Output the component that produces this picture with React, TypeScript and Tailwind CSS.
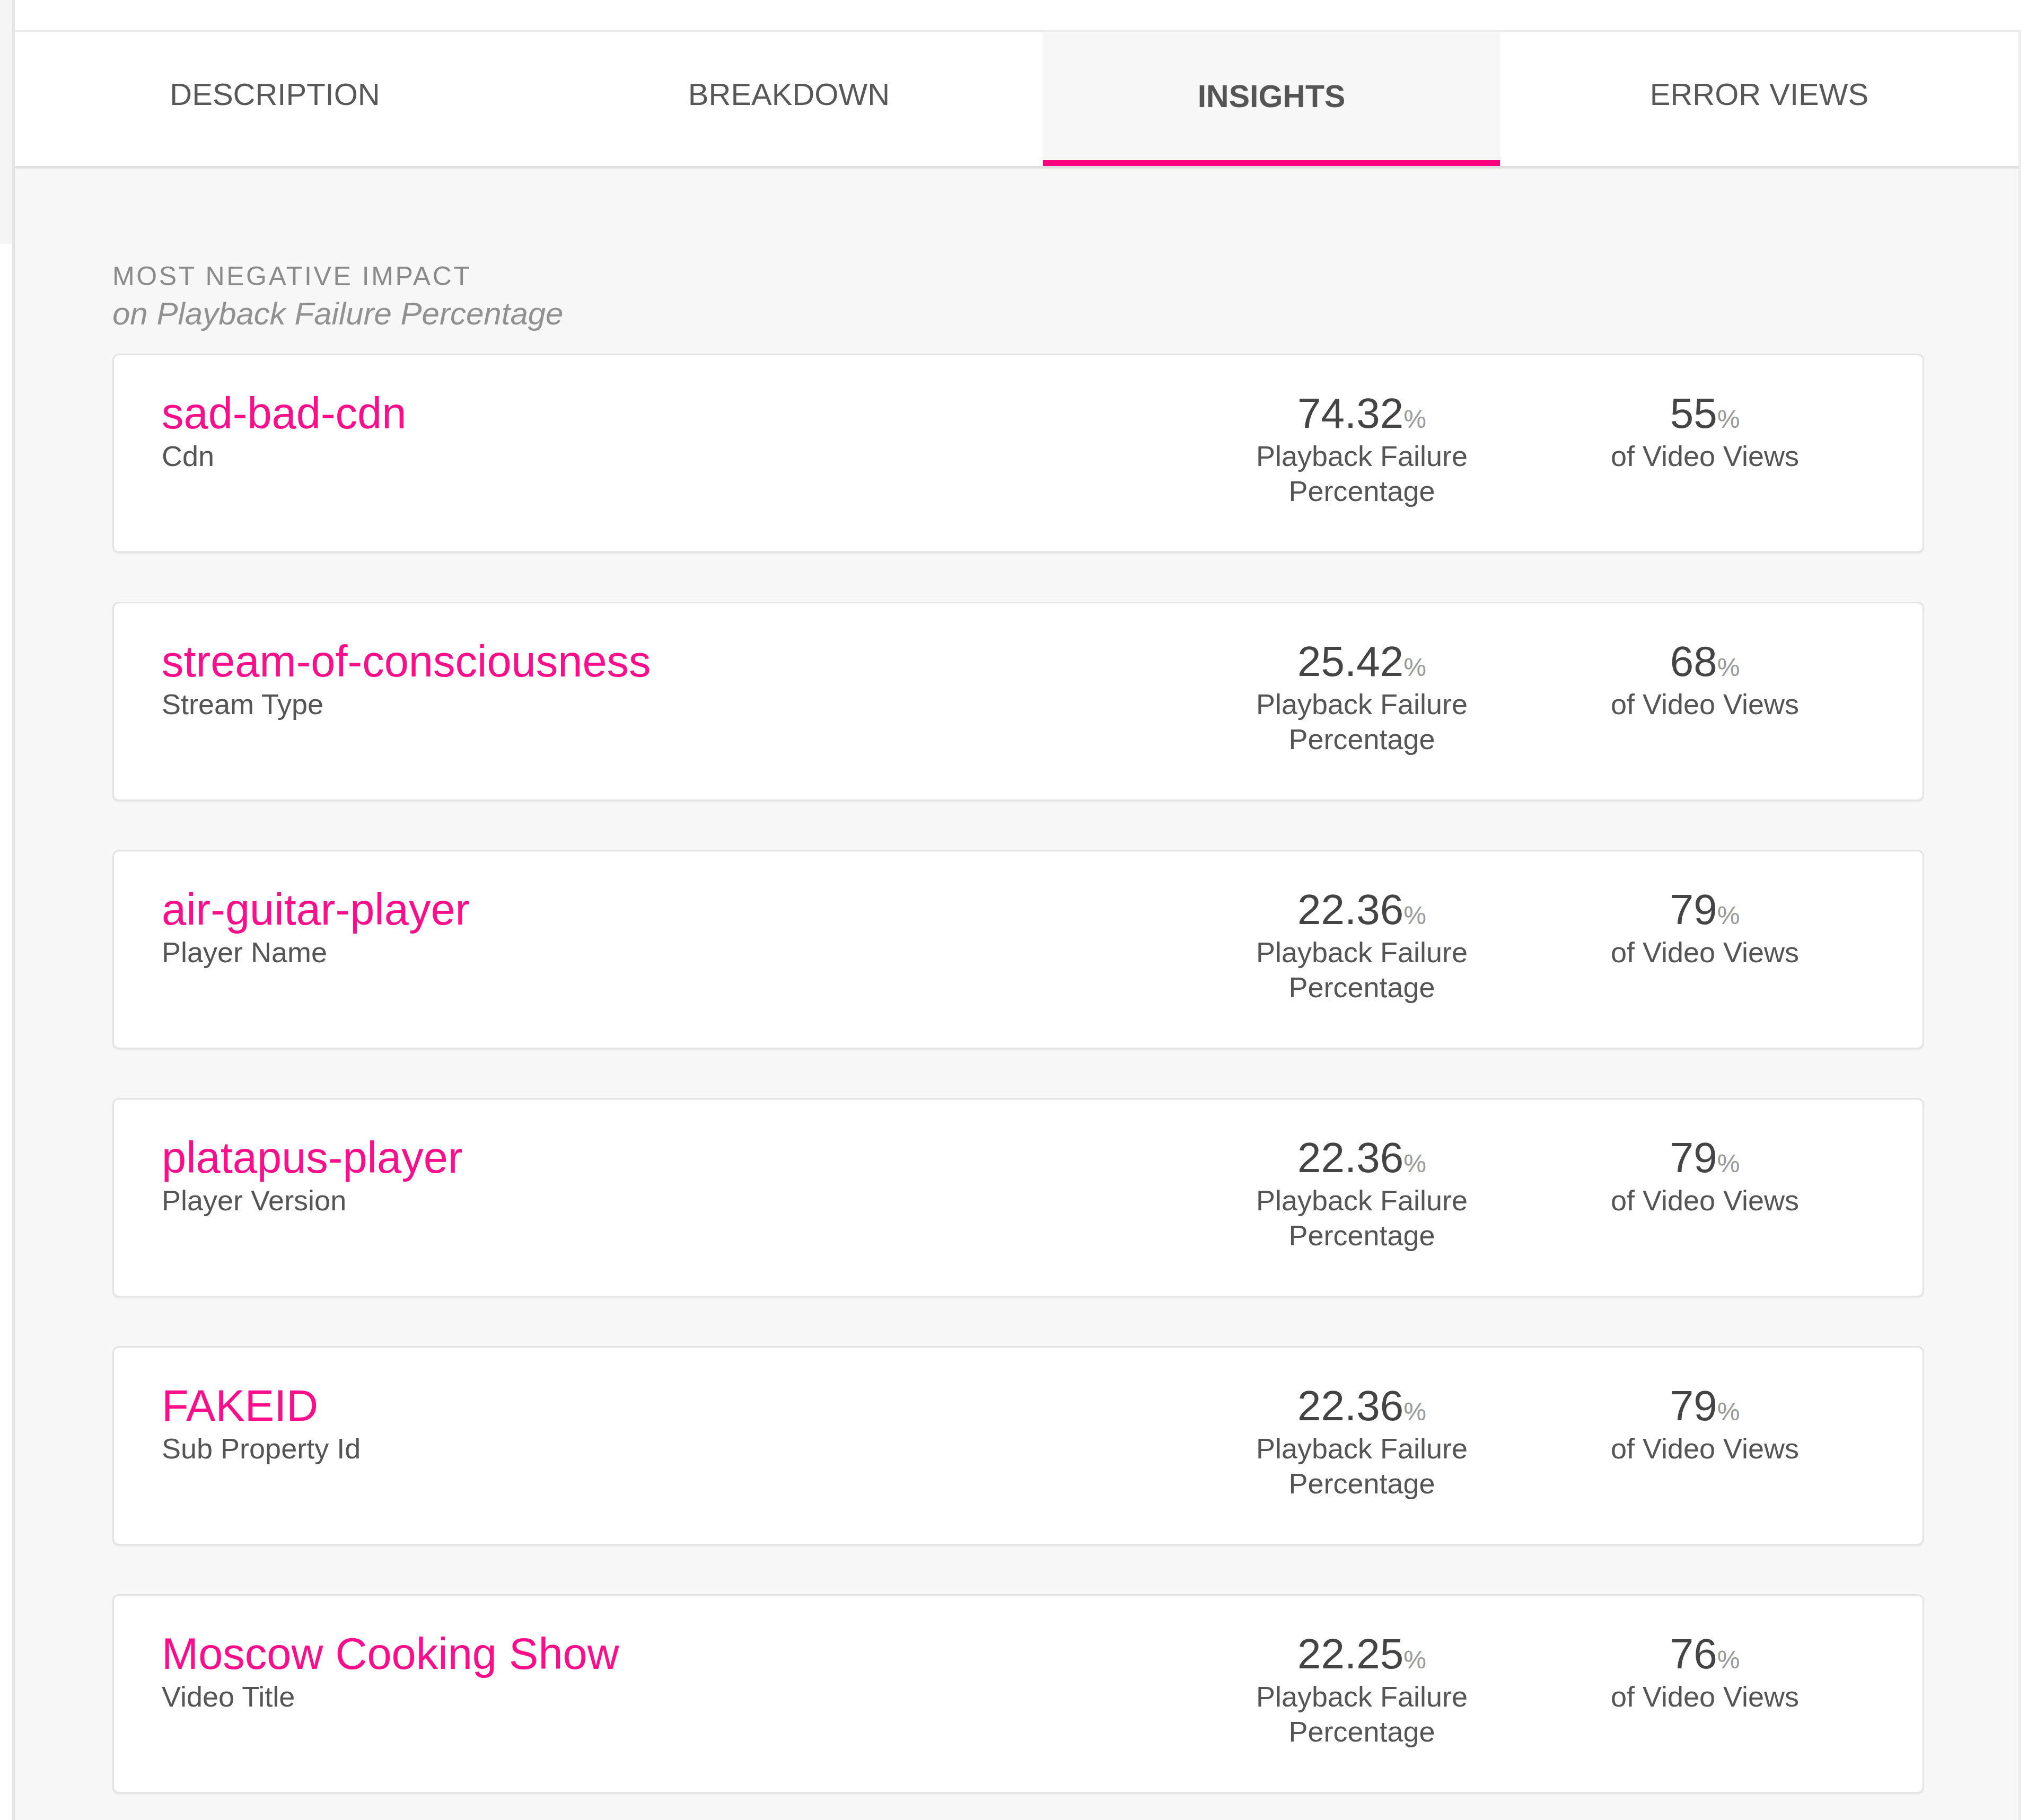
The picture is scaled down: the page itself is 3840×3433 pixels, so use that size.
import React from "react";

type Insight = {
  name: string;
  dimension: string;
  failure: string;
  share: string;
};

const INSIGHTS: Insight[] = [
  { name: "sad-bad-cdn", dimension: "Cdn", failure: "74.32", share: "55" },
  { name: "stream-of-consciousness", dimension: "Stream Type", failure: "25.42", share: "68" },
  { name: "air-guitar-player", dimension: "Player Name", failure: "22.36", share: "79" },
  { name: "platapus-player", dimension: "Player Version", failure: "22.36", share: "79" },
  { name: "FAKEID", dimension: "Sub Property Id", failure: "22.36", share: "79" },
  { name: "Moscow Cooking Show", dimension: "Video Title", failure: "22.25", share: "76" },
];

const FONT = "font-['Liberation_Sans',Arial,sans-serif]";

function Tabs() {
  return (
    <div className="flex h-[258px] border-b-[5px] border-[#e0e0e0] bg-white">
      <div className="w-[981px] shrink-0 pt-[89px] text-center text-[58px] leading-none text-[#585858]">
        DESCRIPTION
      </div>
      <div className="w-[958px] shrink-0 pt-[89px] text-center text-[58px] leading-none text-[#585858]">
        BREAKDOWN
      </div>
      <div className="w-[862px] shrink-0 border-b-[11px] border-[#ff0080] bg-[#f7f7f7] pt-[93px] text-center text-[59px] font-bold leading-none text-[#555555]">
        INSIGHTS
      </div>
      <div className="flex-1 pt-[89px] text-center text-[58px] leading-none text-[#585858]">
        ERROR VIEWS
      </div>
    </div>
  );
}

function Stat({ value, lines }: { value: string; lines: string[] }) {
  return (
    <div className="flex w-[647px] shrink-0 flex-col items-center">
      <div className="flex h-[94px] items-baseline">
        <span className="text-[80px] leading-[94px] text-[#444444]">{value}</span>
        <span className="text-[48px] leading-none text-[#9a9a9a]">%</span>
      </div>
      {lines.map((line) => (
        <div key={line} className="text-[54px] leading-[66px] text-[#555555]">
          {line}
        </div>
      ))}
    </div>
  );
}

function InsightCard({ item }: { item: Insight }) {
  return (
    <div className="flex h-[376px] shrink-0 rounded-[12px] border-[3px] border-[#e4e4e4] bg-white pl-[90px] pr-[87px] pt-[63px] shadow-[0_2px_2px_rgba(0,0,0,0.05)]">
      <div className="flex min-w-0 flex-1 flex-col">
        <div className="text-[83px] leading-[94px] text-[#ff0d8a]">{item.name}</div>
        <div className="text-[54px] leading-[66px] text-[#555555]">{item.dimension}</div>
      </div>
      <Stat value={item.failure} lines={["Playback Failure", "Percentage"]} />
      <Stat value={item.share} lines={["of Video Views"]} />
    </div>
  );
}

export default function App() {
  return (
    <div className={`flex h-[3433px] w-[3840px] overflow-hidden bg-white ${FONT}`}>
      <div className="w-[23px] shrink-0">
        <div className="h-[460px] bg-[#f5f5f5]" />
      </div>
      <div className="w-[5px] shrink-0 bg-[#e6e6e6]" />

      <div className="flex w-[3784px] shrink-0 flex-col pt-[56px]">
        <div className="flex flex-1 flex-col border-r-[5px] border-t-[4px] border-[#ececec] bg-[#f7f7f7]">
          <Tabs />

          <div className="flex flex-col pl-[184px] pr-[178px] pt-[176px]">
            <div className="mb-[42px] flex flex-col gap-[10px]">
              <div className="text-[50px] uppercase leading-[55px] tracking-[3.6px] text-[#8a8a8a]">
                Most Negative Impact
              </div>
              <div className="text-[60px] italic leading-[66px] text-[#919191]">
                on Playback Failure Percentage
              </div>
            </div>

            <div className="flex flex-col gap-[92px]">
              {INSIGHTS.map((item) => (
                <InsightCard key={item.name} item={item} />
              ))}
            </div>
          </div>
        </div>
      </div>

      <div className="w-[28px] shrink-0" />
    </div>
  );
}
